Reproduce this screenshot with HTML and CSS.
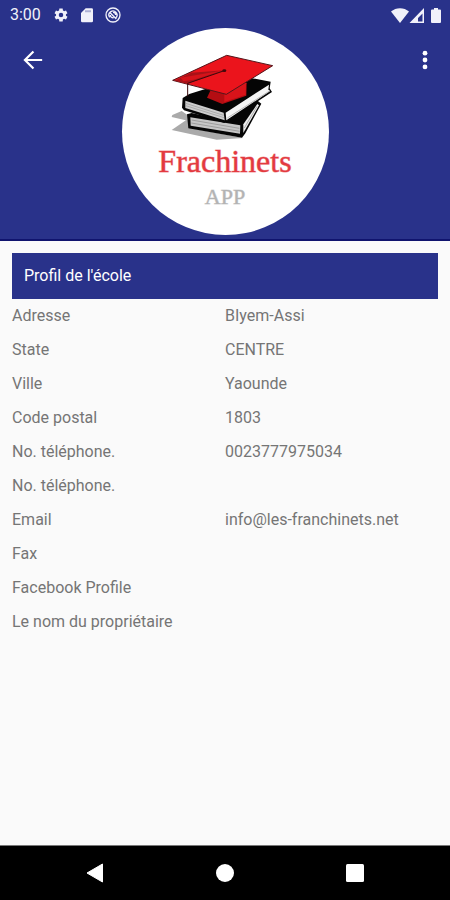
FILE: index.html
```html
<!DOCTYPE html>
<html lang="fr">
<head>
<meta charset="utf-8">
<meta name="viewport" content="width=device-width, initial-scale=1">
<title>Profil de l'école</title>
<link rel="stylesheet" href="styles.css">
</head>
<body>
<header class="header">
  <div class="status">
    <span class="status-time">3:00</span>
    <svg class="status-icon" viewBox="0 0 24 24" aria-hidden="true"><path fill="currentColor" fill-rule="evenodd" d="M19.4 13a7.500 7.500 0 0 0 0-2l2.300-1.800-2.200-3.900-2.800 1.100a8 8 0 0 0-1.800-1L14.500 2.400h-5l-.4 3a8 8 0 0 0-1.800 1L4.500 5.300 2.300 9.200 4.600 11a7.500 7.500 0 0 0 0 2l-2.300 1.800 2.200 3.900 2.800-1.100a8 8 0 0 0 1.800 1l.4 3h5l.4-3a8 8 0 0 0 1.800-1l2.800 1.100 2.200-3.900zM12 15.400a3.400 3.400 0 1 1 0-6.800 3.400 3.400 0 0 1 0 6.800z"/></svg>
    <svg class="status-icon" viewBox="0 0 24 24" aria-hidden="true"><path fill="currentColor" fill-rule="evenodd" d="M10 2h9a2 2 0 0 1 2 2v17a2 2 0 0 1-2 2H5a2 2 0 0 1-2-2V9zm0 3v3h1V5zm3 0v3h1V5zm3 0v3h1V5z"/></svg>
    <svg class="status-icon" viewBox="0 0 24 24" aria-hidden="true"><g fill="none" stroke="currentColor" stroke-width="2"><circle cx="12" cy="12" r="10.500"/><path d="M7 15.500A6 6 0 1 1 16 16.500M8 9l9 9M12 8a4 4 0 0 1 4 4M8 12a4 4 0 0 0 5 4"/></g></svg>
    <svg class="status-signals" viewBox="0 0 54 18" aria-hidden="true">
      <g fill="currentColor"><path d="M1 5.500C6 1 14 1 19 5.500L10 17z"/><path fill-rule="evenodd" d="M34 2v15H19.500zm-1.500 5.500L28 12v3.500h4.500z"/><path d="M44 2h4v1.500h2a1 1 0 0 1 1 1V16a1 1 0 0 1-1 1h-8a1 1 0 0 1-1-1V4.500a1 1 0 0 1 1-1h2z"/></g>
    </svg>
  </div>
  <div class="toolbar">
    <button class="tool tool-back" type="button" aria-label="Retour"><svg class="tool-icon" viewBox="0 0 24 24"><path fill="none" stroke="currentColor" stroke-width="2.400" d="M22 12H3.500M12.500 2.700 3.200 12l9.300 9.300"/></svg></button>
    <div class="logo">
      <svg class="logo-art" viewBox="0 0 360 300" aria-hidden="true">
        <path fill="#aaa" d="M22 210 50 198 82 220 72 228 20 216zM20 255 68 222 90 252 235 279 155 284z"/>
        <path fill="#050505" d="M66 208 80 204 185 228 276 166 289 176 241 265 231 278 70 250z"/>
        <path fill="#c6c6c6" d="M76 217 226 241 225 266 77 242z"/>
        <path fill="#eee" d="m235 238 42-61 5 4-47 83z"/>
        <path fill="none" stroke="#888" stroke-width="2" d="m80 225 143 25M79 234l145 25M238 249l38-65"/>
        <path fill="#050505" d="m53 159 20-12 165-52 79 15-3 20 7 11-143 93-121-38-6-8z"/>
        <path fill="#cecece" d="m61 167 115 36 3 23-118-37z"/>
        <path fill="#f5f5f5" d="m182 203 130-84-2 15 6 4-132 88z"/>
        <path fill="none" stroke="#999" stroke-width="2" d="m62 175 114 36M62 182l115 36M187 219l125-80"/>
        <path fill="#b40d12" d="m138 133 94-35 13 17-1 37-72 25-46-19z"/>
        <path fill="#d9131a" d="m178 147 57-36 8 4-1 34-64 22z"/>
        <path fill="#eb141c" stroke="#54161b" stroke-width="3" stroke-linejoin="round" d="m23 106 162-75 138 31-139 86z"/>
        <path fill="#a81218" d="m29 107 50-24 99-7-90 33-20 7z"/>
        <path fill="#d6131a" d="m47 98 130-22-91 28-31 5z"/>
        <path fill="none" stroke="#380a0c" stroke-width="3" d="M178 77 68 115v39"/>
        <ellipse fill="#43080b" cx="178" cy="77" rx="6" ry="4"/>
      </svg>
      <span class="logo-name">Frachinets</span>
      <span class="logo-sub">APP</span>
    </div>
    <button class="tool" type="button" aria-label="Menu"><svg class="tool-icon" viewBox="0 0 24 24"><g fill="currentColor"><circle cx="12" cy="4.500" r="2.600"/><circle cx="12" cy="12" r="2.600"/><circle cx="12" cy="19.500" r="2.600"/></g></svg></button>
  </div>
</header>
<main class="content">
  <h1 class="title">Profil de l'école</h1>
  <dl class="details">
    <dt>Adresse</dt><dd>BIyem-Assi</dd>
    <dt>State</dt><dd>CENTRE</dd>
    <dt>Ville</dt><dd>Yaounde</dd>
    <dt>Code postal</dt><dd>1803</dd>
    <dt>No. téléphone.</dt><dd>0023777975034</dd>
    <dt>No. téléphone.</dt><dd></dd>
    <dt>Email</dt><dd>info@les-franchinets.net</dd>
    <dt>Fax</dt><dd></dd>
    <dt>Facebook Profile</dt><dd></dd>
    <dt>Le nom du propriétaire</dt><dd></dd>
  </dl>
</main>
<nav class="navbar" aria-label="Système">
  <button class="nav-button" type="button" aria-label="Précédent"><svg class="nav-icon" viewBox="0 0 20 20"><path fill="currentColor" stroke="currentColor" stroke-linejoin="round" d="M2 10 17.500 1v18z"/></svg></button>
  <button class="nav-button" type="button" aria-label="Accueil"><svg class="nav-icon" viewBox="0 0 20 20"><circle fill="currentColor" cx="10" cy="10" r="9"/></svg></button>
  <button class="nav-button" type="button" aria-label="Récents"><svg class="nav-icon" viewBox="0 0 20 20"><rect fill="currentColor" x="1" y="1" width="18" height="18" rx="1.500"/></svg></button>
</nav>
</body>
</html>
```
FILE: styles.css
```css
* {
  box-sizing: border-box;
}

body {
  margin: 0;
  min-height: 100vh;
  display: flex;
  flex-direction: column;
  background: #fafafa;
  color: #757575;
  font: 16px/20px Roboto, "Liberation Sans", sans-serif;
}

button {
  border: 0;
  padding: 0;
  background: none;
  color: #fff;
}

svg {
  display: block;
}

.header {
  background: #29328a;
  border-bottom: 2px solid #10146e;
  padding-bottom: 4px;
  color: #fff;
}

.status {
  display: flex;
  align-items: center;
  gap: 10px;
  height: 28px;
  padding: 2px 6px 0 10px;
  color: #f1f1fa;
}

.status-time {
  margin-right: 2px;
}

.status-icon {
  width: 16px;
  height: 16px;
}

.status-signals {
  width: 54px;
  height: 18px;
  margin-left: auto;
}

.toolbar {
  display: flex;
  justify-content: space-between;
  align-items: flex-start;
}

.tool {
  width: 50px;
  height: 64px;
  display: grid;
  place-items: center;
}

.tool-back {
  padding-left: 16px;
}

.tool-icon {
  width: 22px;
  height: 22px;
}

.logo {
  width: 207px;
  height: 207px;
  padding-top: 17px;
  border-radius: 50%;
  background: #fff;
  display: flex;
  flex-direction: column;
  align-items: center;
  font-family: "Liberation Serif", serif;
}

.logo-art {
  width: 120px;
  height: 100px;
}

.logo-name {
  color: #e33a40;
  font-size: 32px;
  line-height: 32px;
  -webkit-text-stroke: 1px #e33a4080;
}

.logo-sub {
  margin-top: 8px;
  color: #b3b3b3;
  font-size: 22px;
  line-height: 24px;
  -webkit-text-stroke: 1px #b3b3b380;
}

.content {
  flex: 1;
  padding: 12px;
}

.title {
  margin: 0;
  padding: 13px 12px;
  background: #29328a;
  color: #fff;
  font-size: 16px;
  font-weight: 400;
}

.details {
  margin: 0;
  display: grid;
  grid-template-columns: 1fr 1fr;
  grid-auto-rows: 34px;
  align-items: center;
}

.details dd {
  margin: 0;
}

.navbar {
  display: flex;
  height: 55px;
  padding: 0 30px;
  border-top: 1px solid #777;
  background: #000;
}

.nav-button {
  flex: 1;
  display: grid;
  place-items: center;
}

.nav-icon {
  width: 20px;
  height: 20px;
}
```
